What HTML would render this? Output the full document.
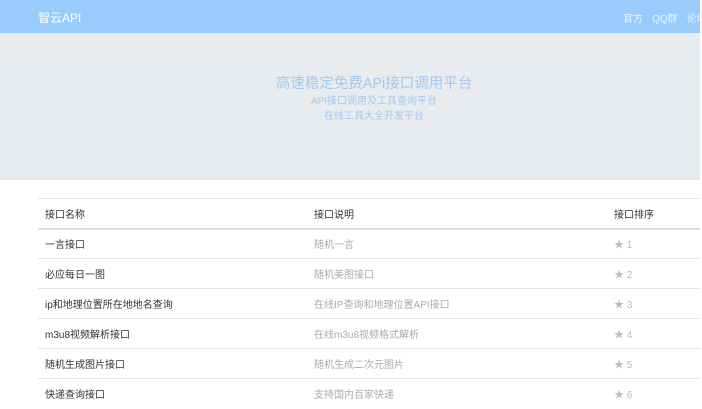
<!DOCTYPE html>
<html><head><meta charset="utf-8"><style>
*{margin:0;padding:0;box-sizing:border-box}
body{width:702px;height:405px;overflow:hidden;background:#fff;font-family:"Liberation Sans","Noto Sans CJK SC",sans-serif;font-size:10px;color:#333;position:relative}
.nav{position:absolute;left:0;top:0;width:700px;height:33px;background:#99cbfd}
.logo{position:absolute;left:38px;top:9px;color:#fff;font-size:12px}
.links{position:absolute;left:623px;top:10px;color:#eaf4ff;font-size:10px;white-space:nowrap}
.links span{margin-right:9px}
.hero{position:absolute;left:0;top:33px;width:700px;height:147px;background:#e9ecef;color:#a3c8f0}
.hero div{position:absolute;left:274px;width:200px;text-align:center}
.hero h1{font-weight:normal;font-size:14.5px;margin-top:41px;line-height:20px;white-space:nowrap}
.hero p{font-size:10px;line-height:15px}
table{position:absolute;left:38px;top:198px;width:662px;border-collapse:collapse}
td,th{height:30px;border-top:1px solid #e3e3e3;text-align:left;padding-left:7px;font-weight:normal;vertical-align:middle}
th{border-bottom:2px solid #ddd;height:30px}
.c2{color:#aaa;}
.c3{color:#bbb}
</style></head><body>
<div class="nav"><div class="logo">智云API</div><div class="links"><span>官方</span><span>QQ群</span><span>论坛</span></div></div>
<div class="hero"><div><h1>高速稳定免费APi接口调用平台</h1><p>API接口调用及工具查询平台</p><p>在线工具大全开发平台</p></div></div>
<table>
<tr><th style="width:269px">接口名称</th><th style="width:300px">接口说明</th><th>接口排序</th></tr>
<tr><td>一言接口</td><td class="c2">随机一言</td><td class="c3">★ 1</td></tr>
<tr><td>必应每日一图</td><td class="c2">随机美图接口</td><td class="c3">★ 2</td></tr>
<tr><td>ip和地理位置所在地地名查询</td><td class="c2">在线IP查询和地理位置API接口</td><td class="c3">★ 3</td></tr>
<tr><td>m3u8视频解析接口</td><td class="c2">在线m3u8视频格式解析</td><td class="c3">★ 4</td></tr>
<tr><td>随机生成图片接口</td><td class="c2">随机生成二次元图片</td><td class="c3">★ 5</td></tr>
<tr><td>快递查询接口</td><td class="c2">支持国内百家快递</td><td class="c3">★ 6</td></tr>
</table>
</body></html>
